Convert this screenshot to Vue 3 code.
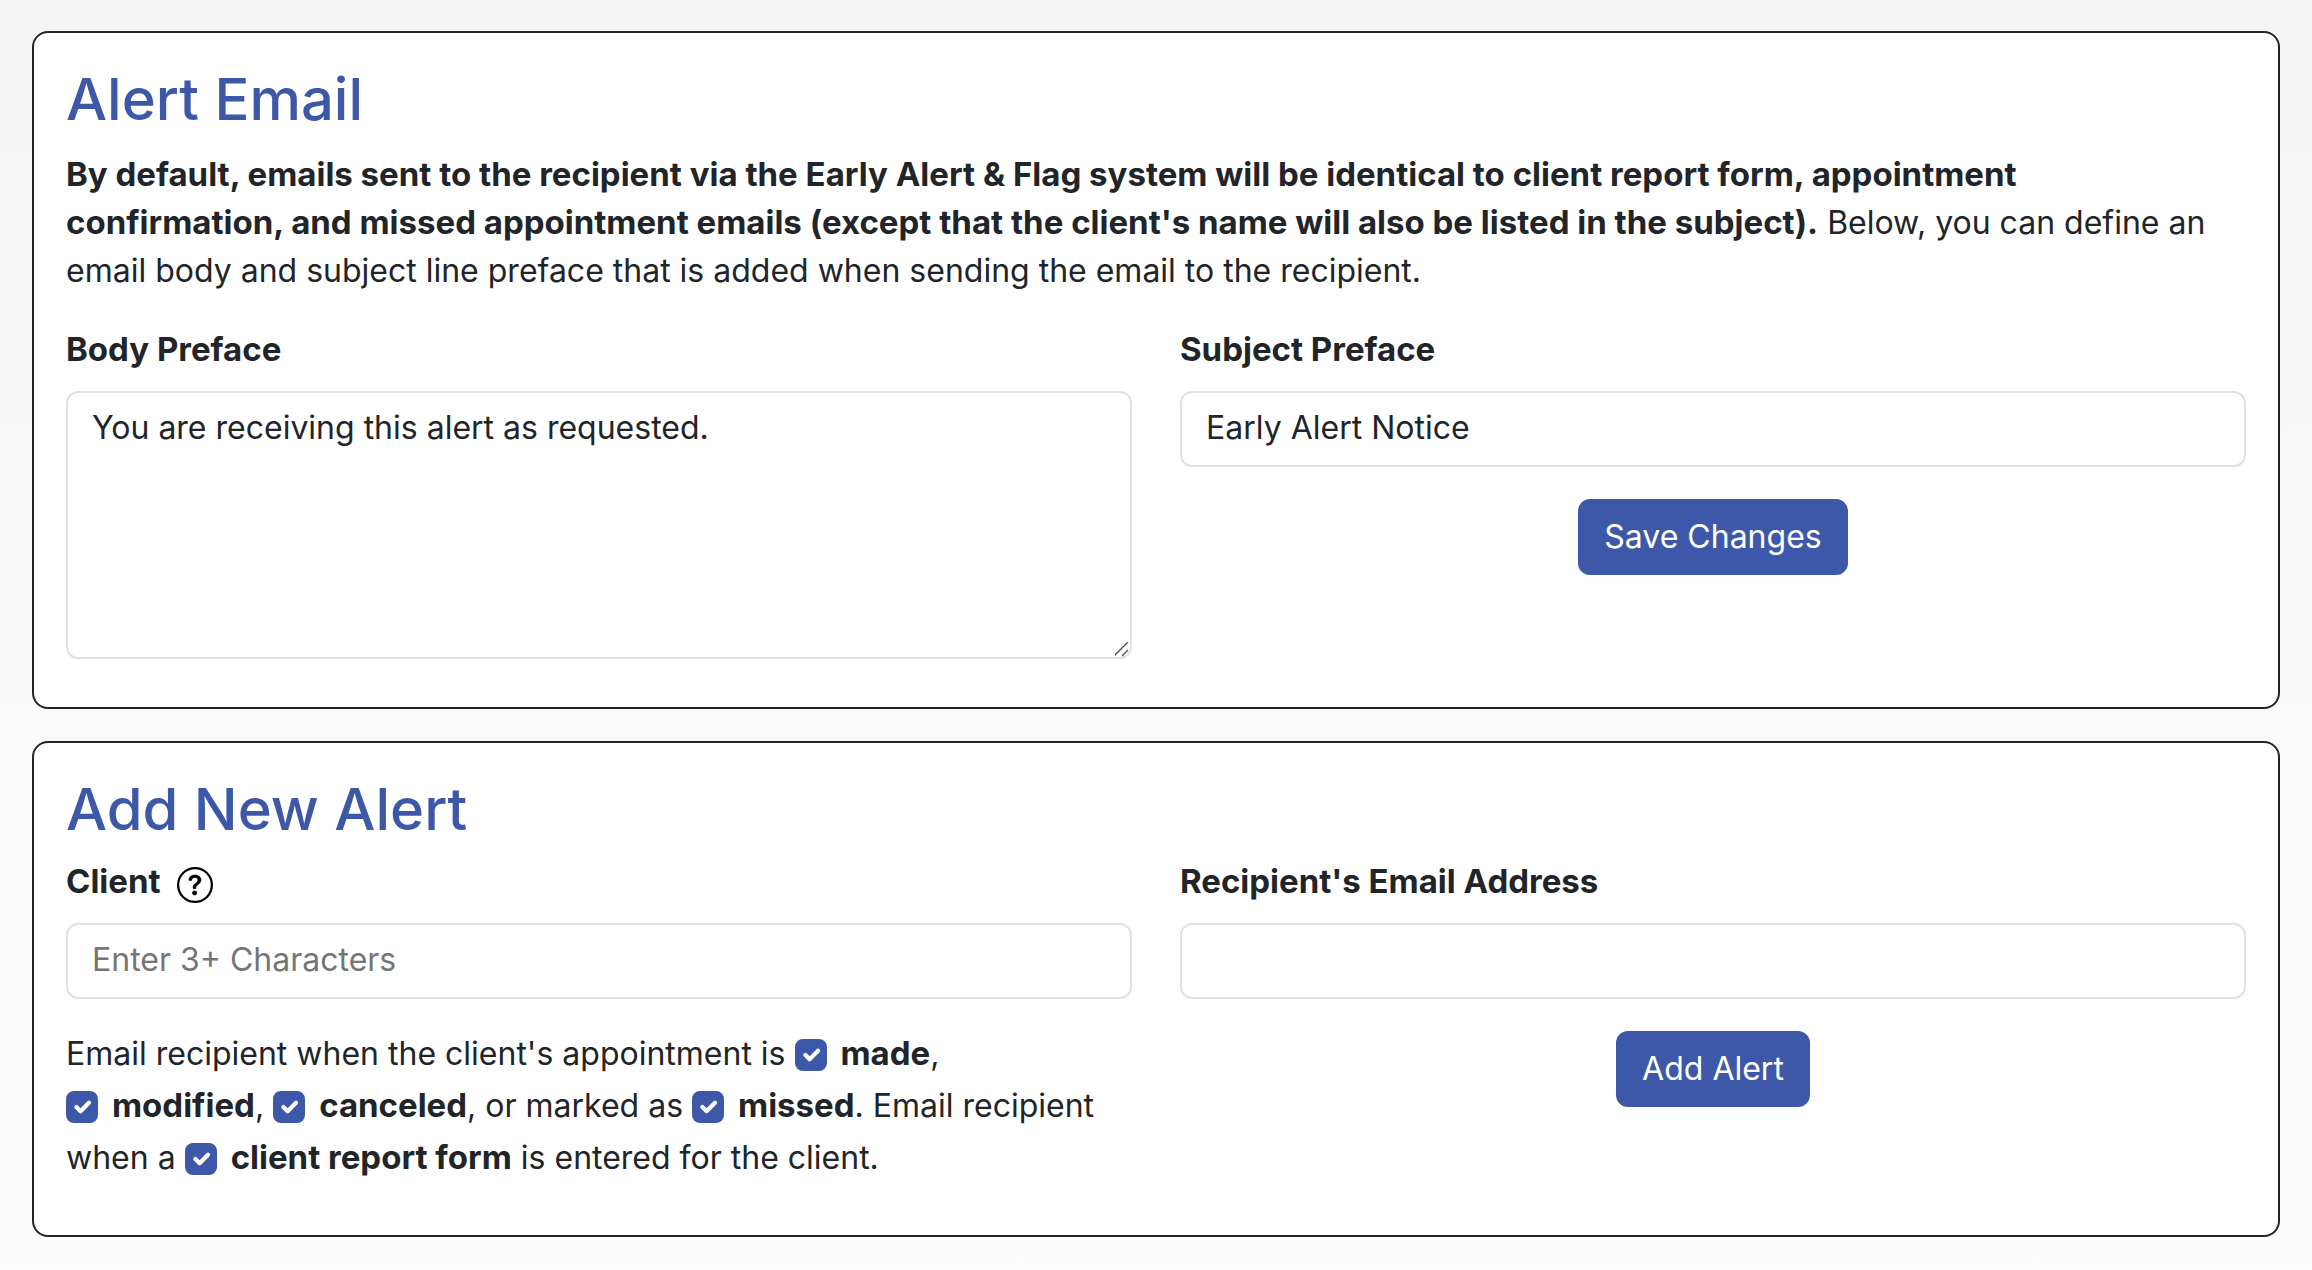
<script setup>
import { ref } from 'vue'

const bodyPreface = ref('You are receiving this alert as requested.')
const subjectPreface = ref('Early Alert Notice')
const client = ref('')
const recipient = ref('')
const made = ref(true)
const modified = ref(true)
const canceled = ref(true)
const missed = ref(true)
const reportForm = ref(true)
</script>

<template>
  <main class="page">
    <form class="card" @submit.prevent>
      <h2 class="title">Alert Email</h2>
      <p class="intro">
        <strong>By default, emails sent to the recipient via the Early Alert &amp; Flag system will be identical to client report form, appointment confirmation, and missed appointment emails (except that the client's name will also be listed in the subject).</strong>
        Below, you can define an email body and subject line preface that is added when sending the email to the recipient.
      </p>
      <div class="columns">
        <div class="column">
          <label class="label" for="body-preface">Body Preface</label>
          <textarea id="body-preface" v-model="bodyPreface" class="control area" rows="5"></textarea>
        </div>
        <div class="column">
          <label class="label" for="subject-preface">Subject Preface</label>
          <input id="subject-preface" v-model="subjectPreface" class="control" type="text">
          <button class="button" type="submit">Save Changes</button>
        </div>
      </div>
    </form>

    <form class="card" @submit.prevent>
      <h2 class="title">Add New Alert</h2>
      <div class="columns">
        <div class="column">
          <div class="label-row">
            <label class="label" for="client">Client</label>
            <button class="help" type="button" aria-label="Help">
              <svg viewBox="0 0 16 16" width="36" height="36" aria-hidden="true">
                <path d="M8 15A7 7 0 1 1 8 1a7 7 0 0 1 0 14m0 1A8 8 0 1 0 8 0a8 8 0 0 0 0 16" />
                <path class="mark" d="M5.255 5.786a.237.237 0 0 0 .241.247h.825c.138 0 .248-.113.266-.25.09-.656.54-1.134 1.342-1.134.686 0 1.314.343 1.314 1.168 0 .635-.374.927-.965 1.371-.673.489-1.206 1.06-1.168 1.987l.003.217a.25.25 0 0 0 .25.246h.811a.25.25 0 0 0 .25-.25v-.105c0-.718.273-.927 1.01-1.486.609-.463 1.244-.977 1.244-2.056 0-1.511-1.276-2.241-2.673-2.241-1.267 0-2.655.59-2.75 2.286m1.557 5.763c0 .533.425.927 1.01.927.609 0 1.028-.394 1.028-.927 0-.552-.42-.94-1.029-.94-.584 0-1.009.388-1.009.94" />
              </svg>
            </button>
          </div>
          <input id="client" v-model="client" class="control" type="text" placeholder="Enter 3+ Characters">
          <p class="events">
            Email recipient when the client's appointment is
            <span class="option"><input id="made" v-model="made" class="check" type="checkbox"><label for="made">made</label>,</span>{{ ' ' }}
            <span class="option"><input id="modified" v-model="modified" class="check" type="checkbox"><label for="modified">modified</label>,</span>{{ ' ' }}
            <span class="option"><input id="canceled" v-model="canceled" class="check" type="checkbox"><label for="canceled">canceled</label>,</span>
            or marked as
            <span class="option"><input id="missed" v-model="missed" class="check" type="checkbox"><label for="missed">missed</label>.</span>
            Email recipient when a
            <span class="option"><input id="report-form" v-model="reportForm" class="check" type="checkbox"><label for="report-form">client report form</label></span>
            is entered for the client.
          </p>
        </div>
        <div class="column">
          <label class="label" for="recipient">Recipient's Email Address</label>
          <input id="recipient" v-model="recipient" class="control" type="email">
          <button class="button" type="submit">Add Alert</button>
        </div>
      </div>
    </form>
  </main>
</template>

<style>
body {
  background: linear-gradient(#f5f5f5, #fdfdfd) no-repeat;
}
</style>

<style scoped>
.page {
  display: flex;
  flex-direction: column;
  gap: 32px;
  padding: 31px 32px 33px;
  color: #212529;
  font: 400 32px/48px Inter, sans-serif;
}

.card {
  padding: 32px 32px 48px;
  border: 2px solid #212529;
  border-radius: 16px;
  background: #fff;
}

.title {
  margin: 0 0 16px;
  color: #3d58a8;
  font-size: 58px;
  font-weight: 500;
  line-height: 68px;
}

.intro {
  margin: 0 0 32px;
  padding: 2px 24px 0 0;
}

.columns {
  display: grid;
  grid-template-columns: 1fr 1fr;
  gap: 48px;
}

.column {
  display: flex;
  flex-direction: column;
}

.label,
.label-row {
  margin-bottom: 20px;
  line-height: 44px;
}

.label-row {
  display: flex;
  align-items: center;
  gap: 16px;
  height: 44px;
}

.label-row .label {
  margin: 0;
}

.label,
.option label,
strong {
  font-size: 33px;
  font-weight: 700;
}

/* Keeps the larger bold text from stretching its line */
.option label,
strong {
  line-height: 40px;
}

.help {
  display: flex;
  margin-top: 8px;
  padding: 0;
  border: 0;
  background: none;
  color: #000;
}

.help svg {
  fill: currentColor;
}

.mark {
  stroke: currentColor;
  stroke-width: 0.2;
}

.control {
  box-sizing: border-box;
  width: 100%;
  height: 76px;
  margin: 0;
  padding: 10px 24px 14px;
  border: 2px solid #dee2e6;
  border-radius: 12px;
  background: #fff;
  color: inherit;
  font: inherit;
}

.control::placeholder {
  color: #757575;
  opacity: 1;
}

.area {
  display: block;
  height: 268px;
  padding-top: 11px;
  resize: vertical;
}

.area::-webkit-resizer {
  background: url("data:image/svg+xml,%3csvg xmlns='http://www.w3.org/2000/svg' viewBox='0 0 15 15'%3e%3cpath fill='none' stroke='%23505050' stroke-width='1.4' d='M-1 14 13 0M7 14 13 8'/%3e%3c/svg%3e") center / contain no-repeat;
}

.button {
  align-self: center;
  margin-top: 32px;
  padding: 12px 24px;
  border: 2px solid #3d58a8;
  border-radius: 12px;
  background: #3d58a8;
  color: #fff;
  font: inherit;
}

.events {
  margin: 29px 0 3px;
  line-height: 52px;
}

.option {
  white-space: nowrap;
}

.check {
  width: 32px;
  height: 32px;
  margin: 0 14px 0 0;
  border-radius: 8px;
  border: 2px solid #dee2e6;
  appearance: none;
  vertical-align: -6px;
}

.check:checked {
  border-color: #3d58a8;
  background: #3d58a8 url("data:image/svg+xml,%3csvg xmlns='http://www.w3.org/2000/svg' viewBox='0 0 20 20'%3e%3cpath fill='none' stroke='%23fff' stroke-linecap='round' stroke-linejoin='round' stroke-width='3' d='m6 10 3 3 6-6'/%3e%3c/svg%3e") center / contain no-repeat;
}
</style>
